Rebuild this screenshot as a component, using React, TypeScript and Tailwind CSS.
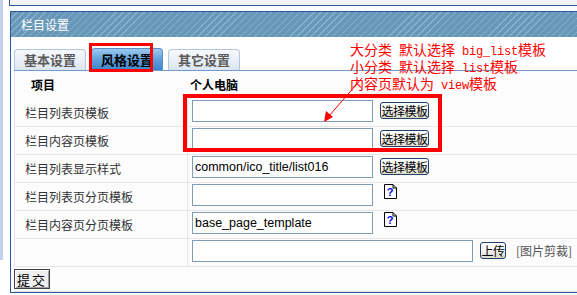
import React from "react";

const CJK = "font-['Noto_Sans_CJK_SC','Noto_Sans',sans-serif]";

function XpButton({ children, w }: { children: React.ReactNode; w: string }) {
  return (
    <button
      className={`${w} h-[17px] border border-[#1c3f6e] rounded-[3px] bg-linear-to-b from-white via-[#f4f3ee] to-[#dcd9cc] text-[12px] tracking-[-0.5px] leading-[15px] text-black flex items-center justify-center p-0 whitespace-nowrap overflow-hidden`}
    >
      {children}
    </button>
  );
}

function HelpIcon() {
  return (
    <svg width="13" height="15" viewBox="0 0 13 15" className="block">
      <path d="M0.5 0.5 H9 L12.5 4 V14.5 H0.5 Z" fill="#fff" stroke="#000" strokeWidth="1" />
      <path d="M9 0.5 V4 H12.5" fill="none" stroke="#000" strokeWidth="1" />
      <text x="6" y="12" textAnchor="middle" fontSize="11" fontWeight="bold" fill="#0000ee" fontFamily="Liberation Sans, sans-serif">?</text>
    </svg>
  );
}

function Input({ value, w = "w-[181px]" }: { value?: string; w?: string }) {
  return (
    <div
      className={`${w} h-[22px] border border-[#7f9db9] bg-white pl-[2px] text-[12.5px] leading-[20px] text-black font-['Liberation_Sans',sans-serif] whitespace-nowrap overflow-hidden`}
    >
      {value}
    </div>
  );
}

function Row({ label, children }: { label: string; children: React.ReactNode }) {
  return (
    <div className="flex h-[28px] border-b border-[#e6e6e6]">
      <div className="w-[173px] shrink-0 border-r border-[#e6e6e6] pl-[10px] flex items-center text-[12px] text-[#333]">
        {label}
      </div>
      <div className="flex-1 pl-[4px] pt-[1px] flex items-start">{children}</div>
    </div>
  );
}

function Tab({ label, active }: { label: string; active?: boolean }) {
  return active ? (
    <div className="w-[72px] h-[22px] rounded-t-[4px] border border-b-0 border-[#5b8fc4] bg-linear-to-b from-[#9ccaf0] via-[#5f9fdb] to-[#3b87cf] flex items-center justify-center text-[13px] font-bold text-black">
      {label}
    </div>
  ) : (
    <div className="w-[72px] h-[21px] rounded-t-[4px] border border-b-0 border-[#b4c6dc] bg-linear-to-b from-[#f7f9fc] to-[#dde6f1] flex items-center justify-center text-[13px] font-bold text-[#5a5a5a]">
      {label}
    </div>
  );
}

const M = "font-['Liberation_Mono',monospace] text-[12px] tracking-[-0.2px]";
function Sp() {
  return <span className="inline-block w-[7px]" />;
}

export default function App() {
  return (
    <div className={`relative w-[577px] h-[295px] overflow-hidden bg-white ${CJK} text-[12px]`}>
      <div className="flex">
        <div className="w-[3px] h-[260px] bg-[#c4d0ec] shrink-0" />
        <div className="ml-[6px] flex-1 flex flex-col">
          <div className="h-[6px] border-l border-b border-[#2b5a9a] bg-[#f3f3f3]" />
          <div className="mt-[5px] ml-[1px] h-[282px] border-l border-t border-b border-[#2b5a9a] flex flex-col bg-white">
            <div className="h-[25px] bg-[repeating-linear-gradient(135deg,#6797b9_0px,#6797b9_4px,#88afcb_4px,#88afcb_5px)] pl-[10px] text-white text-[12px] leading-[25px]">
              栏目设置
            </div>
            <div className="h-[34px] ml-[3px] border-b border-[#6f9bcc] flex items-end gap-[5px]">
              <Tab label="基本设置" />
              <Tab label="风格设置" active />
              <Tab label="其它设置" />
            </div>
            <div className="ml-[3px] border-l border-[#e6e6e6] bg-[#fcfcfc] flex flex-col">
              <div className="flex h-[28px] items-center text-[12px] font-bold text-black">
                <div className="w-[173px] shrink-0 pl-[16px]">项目</div>
                <div className="pl-[2px]">个人电脑</div>
              </div>
              <Row label="栏目列表页模板">
                <Input />
                <div className="ml-[7px] mt-[2px]">
                  <XpButton w="w-[49px]">选择模板</XpButton>
                </div>
              </Row>
              <Row label="栏目内容页模板">
                <Input />
                <div className="ml-[7px] mt-[2px]">
                  <XpButton w="w-[49px]">选择模板</XpButton>
                </div>
              </Row>
              <Row label="栏目列表显示样式">
                <Input value="common/ico_title/list016" />
                <div className="ml-[7px] mt-[2px]">
                  <XpButton w="w-[49px]">选择模板</XpButton>
                </div>
              </Row>
              <Row label="栏目列表页分页模板">
                <Input />
                <div className="ml-[11px]">
                  <HelpIcon />
                </div>
              </Row>
              <Row label="栏目内容页分页模板">
                <Input value="base_page_template" />
                <div className="ml-[11px]">
                  <HelpIcon />
                </div>
              </Row>
              <Row label="">
                <Input w="w-[281px]" />
                <div className="ml-[7px] mt-[2px]">
                  <XpButton w="w-[26px]">上传</XpButton>
                </div>
                <div className="ml-[10px] mt-[2px] text-[12px] leading-[17px] text-[#555] whitespace-nowrap">[图片剪裁]</div>
              </Row>
            </div>
            <div className="h-[25px] ml-[3px] border-b border-[#e0e0e0] bg-[#fcfcfc] pt-[2px]">
              <button className="w-[36px] h-[20px] border border-[#404040] bg-[#efefef] shadow-[inset_1px_1px_0_#ffffff,inset_-1px_-1px_0_#a0a0a0] text-[13px] leading-[17px] text-black p-0 tracking-[2px]">
                提交
              </button>
            </div>
          </div>
        </div>
      </div>

      {/* annotations */}
      <div className="absolute left-[89px] top-[43px] w-[64px] h-[29px] border-[3px] border-[#ff0000]" />
      <div className="absolute left-[183px] top-[94px] w-[259px] h-[58px] border-[4px] border-[#ff0000]" />
      <div className="absolute left-[350px] top-[42px] text-[#ff0000] text-[14px] leading-[14px] whitespace-nowrap">
        <div>大分类<Sp />默认选择<Sp /><span className={M}>big_list</span>模板</div>
        <div>小分类<Sp />默认选择<Sp /><span className={M}>list</span>模板</div>
        <div>内容页默认为<Sp /><span className={M}>view</span>模板</div>
      </div>
      <svg className="absolute left-0 top-0" width="577" height="295" viewBox="0 0 577 295">
        <line x1="362" y1="78" x2="329" y2="116" stroke="#ff0000" strokeWidth="1" />
        <polygon points="324,122 326,111 333,117" fill="#ff0000" />
      </svg>
    </div>
  );
}
